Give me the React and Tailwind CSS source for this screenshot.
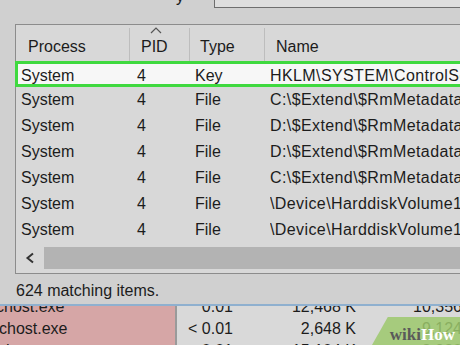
import React from 'react';

const rows = [
    { process: 'System', pid: '4', type: 'Key', name: 'HKLM\\SYSTEM\\ControlSet001\\Control' },
    { process: 'System', pid: '4', type: 'File', name: 'C:\\$Extend\\$RmMetadata\\$TxfLog' },
    { process: 'System', pid: '4', type: 'File', name: 'D:\\$Extend\\$RmMetadata\\$Txf' },
    { process: 'System', pid: '4', type: 'File', name: 'D:\\$Extend\\$RmMetadata\\$TxfLog' },
    { process: 'System', pid: '4', type: 'File', name: 'C:\\$Extend\\$RmMetadata\\$Txf' },
    { process: 'System', pid: '4', type: 'File', name: '\\Device\\HarddiskVolume1' },
    { process: 'System', pid: '4', type: 'File', name: '\\Device\\HarddiskVolume1' },
];

const Row = ({ row, selected }) => (
    <div
        className={
            selected
                ? 'grid grid-cols-[116px_58px_75px_1fr] h-[26px] items-center bg-[#f7f7f7] border-[3px] border-[#3fd93f] -ml-[1px] pl-[3px] whitespace-nowrap overflow-hidden'
                : 'grid grid-cols-[116px_58px_75px_1fr] h-[26px] items-center pl-[5px] whitespace-nowrap overflow-hidden'
        }
    >
        <span>{row.process}</span>
        <span>{row.pid}</span>
        <span>{row.type}</span>
        <span className="tracking-[0.4px] overflow-hidden">{row.name}</span>
    </div>
);

const App = () => {
    return (
        <div
            className="w-[460px] h-[345px] overflow-hidden bg-[#d0d0d0] text-[#1c1c1c] text-[16px] relative flex flex-col"
            style={{ fontFamily: '"Liberation Sans", Arial, sans-serif' }}
        >
            {/* top: search field edge */}
            <div className="h-[24px] flex shrink-0">
                <div className="w-[214px] relative overflow-hidden">
                    <span className="absolute left-[176px] -top-[15px] text-[16px]">y</span>
                </div>
                <div className="flex-1 h-[8px] bg-[#dedede] border-l border-b border-[#6e6e6e]"></div>
            </div>

            {/* results list */}
            <div className="ml-[15px] w-[460px] h-[250px] shrink-0 border-t border-l border-b border-[#8c8c8c] bg-[#d8d8d8] flex flex-col">
                <div className="grid grid-cols-[114px_60px_75px_1fr] h-[36px] shrink-0 whitespace-nowrap">
                    <div className="pl-[12px] pt-[7px] border-r border-[#bdbdbd] mt-[3px]">Process</div>
                    <div className="pl-[11px] pt-[7px] border-r border-[#bdbdbd] mt-[3px] relative">
                        PID
                        <svg className="absolute left-[20px] -top-[1px]" width="12" height="7" viewBox="0 0 12 7">
                            <path d="M1 6 L6 1 L11 6" fill="none" stroke="#555" strokeWidth="1.2" />
                        </svg>
                    </div>
                    <div className="pl-[10px] pt-[7px] border-r border-[#bdbdbd] mt-[3px]">Type</div>
                    <div className="pl-[11px] pt-[7px] mt-[3px]">Name</div>
                </div>

                {rows.map((row, i) => (
                    <Row key={i} row={row} selected={i === 0} />
                ))}

                {/* horizontal scrollbar */}
                <div className="flex-1 flex items-center">
                    <div className="w-[28px] h-[22px] flex items-center justify-center">
                        <svg width="10" height="12" viewBox="0 0 10 12">
                            <path d="M8 1.5 L2.5 6 L8 10.5" fill="none" stroke="#333" strokeWidth="2" />
                        </svg>
                    </div>
                    <div className="flex-1 h-[22px] bg-[#b3b3b3]"></div>
                </div>
            </div>

            {/* status */}
            <div className="h-[32px] shrink-0 flex items-center pl-[16px] pt-[4px] border-b-2 border-[#8fb0cf]">
                624 matching items.
            </div>

            {/* process list behind */}
            <div className="flex-1 flex overflow-hidden">
                <div className="w-[175px] shrink-0 bg-[#d6a6a6] flex flex-col -mt-[10px] whitespace-nowrap">
                    <div className="h-[22px] leading-[22px] -ml-[20px]">svchost.exe</div>
                    <div className="h-[22px] leading-[22px] -ml-[17px]">svchost.exe</div>
                    <div className="h-[22px] leading-[22px] -ml-[18px]">svchost.exe</div>
                </div>
                <div className="w-[2px] shrink-0 bg-[#9a9a9a]"></div>
                <div className="flex-1 bg-[#d9d9d9] flex flex-col -mt-[10px] whitespace-nowrap">
                    {[
                        ['0.01', '12,468 K', '10,356'],
                        ['< 0.01', '2,648 K', '9,124'],
                        ['0.01', '15,104 K', '8,920'],
                    ].map((r, i) => (
                        <div key={i} className="grid grid-cols-[56px_123px_106px] h-[22px] leading-[22px]">
                            <span className="text-right">{r[0]}</span>
                            <span className="text-right">{r[1]}</span>
                            <span className="text-right">{r[2]}</span>
                        </div>
                    ))}
                </div>
            </div>

            {/* watermark */}
            <div className="absolute right-0 bottom-0 w-[88px] h-[28px] bg-[#9cc86c]/85 [clip-path:polygon(18%_0,100%_0,100%_100%,0_100%)] flex items-end justify-end pr-[5px] pb-[2px]">
                <span className="text-[17px] font-bold leading-none" style={{ fontFamily: '"Liberation Serif", serif' }}>
                    <span className="text-[#5a5a5a]">wiki</span>
                    <span className="text-white">How</span>
                </span>
            </div>
        </div>
    );
};

export default App;
